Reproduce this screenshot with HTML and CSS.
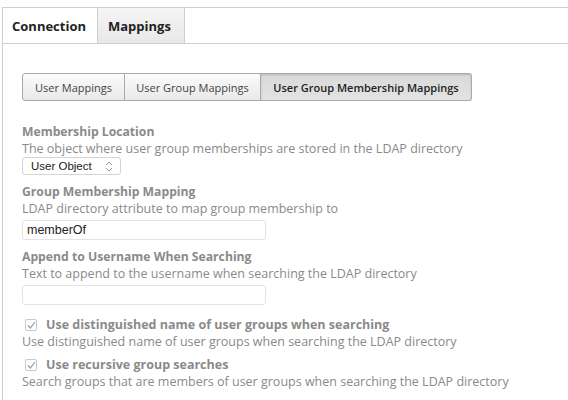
FILE: index.html
```html
<!DOCTYPE html>
<html>
<head>
<meta charset="utf-8">
<link rel="stylesheet" href="styles.css">
</head>
<body>
<div class="panel">
  <div class="tabs">
    <div class="tab tab-active">Connection</div>
    <div class="tab tab-inactive">Mappings</div>
  </div>
  <div class="content">
    <div class="seg">
      <div class="seg-btn w1">User Mappings</div>
      <div class="seg-btn w2">User Group Mappings</div>
      <div class="seg-btn w3 seg-on">User Group Membership Mappings</div>
    </div>
    <div class="field">
      <div class="label">Membership Location</div>
      <div class="desc">The object where user group memberships are stored in the LDAP directory</div>
      <div class="select">User Object<svg class="arrows" width="8" height="11" viewBox="0 0 8 11"><path d="M1 4 L4 1 L7 4 M1 7 L4 10 L7 7" fill="none" stroke="#999" stroke-width="1"/></svg></div>
    </div>
    <div class="field">
      <div class="label">Group Membership Mapping</div>
      <div class="desc">LDAP directory attribute to map group membership to</div>
      <div class="input">memberOf</div>
    </div>
    <div class="field field-last">
      <div class="label">Append to Username When Searching</div>
      <div class="desc">Text to append to the username when searching the LDAP directory</div>
      <div class="input"></div>
    </div>
    <div class="field check-field">
      <div class="check-row"><span class="box"><svg width="9" height="8" viewBox="0 0 9 8"><path d="M1 4.5 L3.3 7 L8 1" fill="none" stroke="#999" stroke-width="1.2"/></svg></span><span class="label check-label">Use distinguished name of user groups when searching</span></div>
      <div class="desc">Use distinguished name of user groups when searching the LDAP directory</div>
    </div>
    <div class="field check-field">
      <div class="check-row"><span class="box"><svg width="9" height="8" viewBox="0 0 9 8"><path d="M1 4.5 L3.3 7 L8 1" fill="none" stroke="#999" stroke-width="1.2"/></svg></span><span class="label check-label">Use recursive group searches</span></div>
      <div class="desc">Search groups that are members of user groups when searching the LDAP directory</div>
    </div>
  </div>
</div>
</body>
</html>
```
FILE: styles.css
```css
html, body {
  margin: 0;
  padding: 0;
  background: #fff;
  font-family: "Open Sans", "DejaVu Sans", sans-serif;
}
.panel {
  margin: 7px 0 0 2px;
  border-left: 1px solid #cfcfcf;
  height: 393px;
}
.tabs {
  display: flex;
  height: 35px;
  border-top: 1px solid #cfcfcf;
  border-bottom: 1px solid #cfcfcf;
}
.tab {
  box-sizing: border-box;
  height: 35px;
  display: flex;
  align-items: center;
  font-size: 13px;
  font-weight: bold;
  color: #222;
  border-right: 1px solid #cfcfcf;
}
.tab-active {
  width: 95px;
  padding-left: 9px;
  background: #fff;
}
.tab-inactive {
  width: 87px;
  padding-left: 10px;
  background: linear-gradient(#f5f5f5, #e8e8e8);
}
.content {
  padding: 29px 0 0 19px;
}
.seg {
  display: flex;
  height: 28px;
  margin-bottom: 22px;
}
.seg-btn {
  box-sizing: border-box;
  height: 28px;
  display: flex;
  align-items: center;
  justify-content: center;
  font-family: "Open Sans", sans-serif;
  font-size: 11px;
  color: #444;
  border: 1px solid #a9a9a9;
  border-left: none;
  background: linear-gradient(#fbfbfb, #e9e9e9);
}
.w1 { width: 103px; border-left: 1px solid #a9a9a9; border-radius: 3px 0 0 3px; }
.w2 { width: 136px; }
.w3 { width: 211px; border-radius: 0 3px 3px 0; }
.seg-on {
  background: linear-gradient(#d9d9d9, #e3e3e3);
  font-weight: 600;
  color: #222;
  box-shadow: inset 0 1px 2px rgba(0,0,0,0.15);
}
.field {
  margin-bottom: 8px;
}
.field-last {
  margin-bottom: 11px;
}
.label {
  font-size: 12.2px;
  font-weight: bold;
  color: #8a8a8a;
  line-height: 17px;
}
.check-label {
  font-size: 12.5px;
}
.desc {
  font-size: 12.5px;
  color: #8a8a8a;
  line-height: 17px;
}
.select {
  box-sizing: border-box;
  width: 99px;
  height: 18px;
  border: 1px solid #d4d4d4;
  border-radius: 3px;
  font-family: "Liberation Sans", sans-serif;
  font-size: 11.5px;
  color: #222;
  display: flex;
  align-items: center;
  justify-content: space-between;
  padding: 0 7px 0 8px;
  background: #fff;
}
.input {
  box-sizing: border-box;
  width: 244px;
  height: 20px;
  margin-top: 3px;
  border: 1px solid #e2e2e2;
  border-radius: 3px;
  font-family: "Liberation Sans", sans-serif;
  font-size: 12.5px;
  color: #222;
  padding: 0 0 0 4px;
  display: flex;
  align-items: center;
}
.check-field { margin-bottom: 6px; }
.check-row {
  display: flex;
  align-items: center;
  margin-left: 3px;
}
.box {
  box-sizing: border-box;
  width: 12px;
  height: 12px;
  border: 1px solid #c8c8c8;
  border-radius: 2px;
  margin-right: 9px;
  display: flex;
  align-items: center;
  justify-content: center;
}
```
